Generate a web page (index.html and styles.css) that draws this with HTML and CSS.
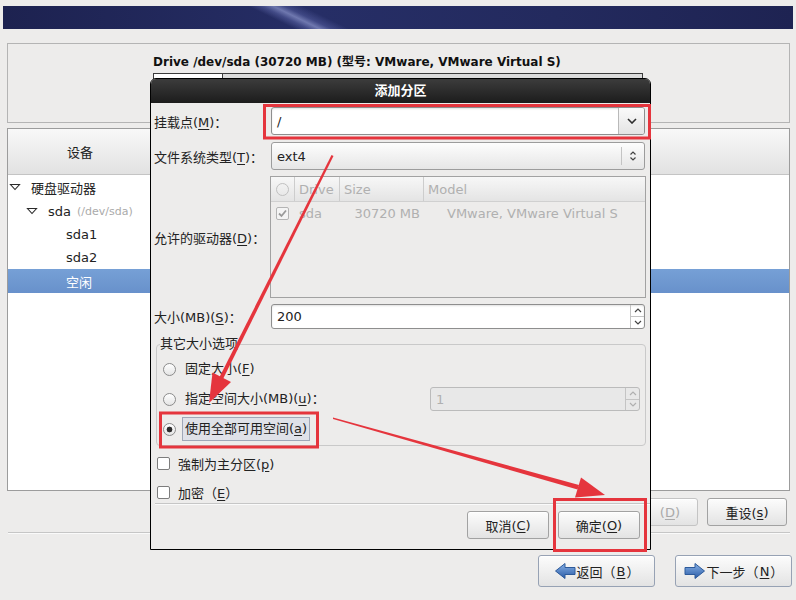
FILE: index.html
```html
<!DOCTYPE html>
<html lang="zh-CN">
<head>
    <meta charset="UTF-8">
    <meta name="viewport" content="width=device-width, initial-scale=1.0">
    <title>添加分区</title>
    <link rel="stylesheet" href="styles.css">
</head>
<body>
    <!-- Installer banner -->
    <div class="banner"></div>

    <!-- Drive summary -->
    <div class="drive-box">
        <div class="drive-title">Drive /dev/sda (30720 MB) (型号: VMware, VMware Virtual S)</div>
        <div class="drive-bar"><div class="seg-used"></div></div>
    </div>

    <!-- Device tree -->
    <div class="tree-panel">
        <div class="tree-head"><div class="col-device">设备</div></div>
        <div class="tree-row lvl0">
            <svg class="expander" width="12" height="8" viewBox="0 0 12 8"><path d="M1.5 1.5h9l-4.5 5z" fill="none" stroke="#2a2a2a" stroke-width="1.1"/></svg>
            <span>硬盘驱动器</span>
        </div>
        <div class="tree-row lvl1">
            <svg class="expander" width="12" height="8" viewBox="0 0 12 8"><path d="M1.5 1.5h9l-4.5 5z" fill="none" stroke="#2a2a2a" stroke-width="1.1"/></svg>
            <span>sda</span><span class="dev-path">(/dev/sda)</span>
        </div>
        <div class="tree-row lvl2">sda1</div>
        <div class="tree-row lvl2">sda2</div>
        <div class="tree-row lvl2 selected">空闲</div>
    </div>

    <div class="actions">
        <button class="button disabled delete-button"><span class="delete-word">删除</span>(<u>D</u>)</button>
        <button class="button">重设(<u>s</u>)</button>
    </div>
    <div class="separator"></div>
    <div class="nav">
        <button class="button nav-button">
            <svg width="22" height="18" viewBox="0 0 22 18"><defs><linearGradient id="back-fill" x1="0" y1="0" x2="0" y2="1"><stop offset="0" stop-color="#86b0e6"/><stop offset="1" stop-color="#2a5ba6"/></linearGradient></defs><path d="M21 5.5H11V1.5L1.5 9l9.5 7.5v-4h10z" fill="url(#back-fill)" stroke="#2d5a9a" stroke-width="1"/></svg>
            返回（<u>B</u>）
        </button>
        <button class="button nav-button">
            <svg width="22" height="18" viewBox="0 0 22 18"><defs><linearGradient id="next-fill" x1="0" y1="0" x2="0" y2="1"><stop offset="0" stop-color="#86b0e6"/><stop offset="1" stop-color="#2a5ba6"/></linearGradient></defs><path d="M1 5.5h10V1.5L20.5 9 11 16.5v-4H1z" fill="url(#next-fill)" stroke="#2d5a9a" stroke-width="1"/></svg>
            下一步（<u>N</u>）
        </button>
    </div>

    <!-- Add partition dialog -->
    <div class="dialog">
        <div class="dialog-title">添加分区</div>
        <div class="dialog-body">
            <div class="form-row row-mount">
                <label class="field-label">挂载点(<u>M</u>)：</label>
                <div class="combo-entry">
                    <span class="entry-text">/</span>
                    <span class="combo-button">
                        <svg width="10" height="6" viewBox="0 0 10 6"><path d="M1 1l4 4 4-4" fill="none" stroke="#2e2e2e" stroke-width="1.6"/></svg>
                    </span>
                </div>
            </div>

            <div class="form-row row-fs">
                <label class="field-label">文件系统类型(<u>T</u>)：</label>
                <div class="combo">
                    <span class="combo-text">ext4</span>
                    <span class="combo-sep"></span>
                    <svg class="updown" width="8" height="12" viewBox="0 0 8 12"><path d="M1.5 4.5L4 2l2.5 2.5M1.5 7.5L4 10l2.5-2.5" fill="none" stroke="#444" stroke-width="1.2"/></svg>
                </div>
            </div>

            <div class="form-row row-drives">
                <label class="field-label">允许的驱动器(<u>D</u>)：</label>
                <div class="drive-table">
                    <div class="table-head">
                        <div class="th th-check"><span class="radio-mark"></span></div>
                        <div class="th">Drive</div>
                        <div class="th">Size</div>
                        <div class="th">Model</div>
                    </div>
                    <div class="table-row">
                        <div class="td td-check">
                            <svg width="13" height="13" viewBox="0 0 13 13"><rect x="0.5" y="0.5" width="12" height="12" rx="1.5" fill="#f4f4f4" stroke="#b4b4b4"/><path d="M3 6.5l2.5 2.5L10 3.5" fill="none" stroke="#9a9a9a" stroke-width="1.8"/></svg>
                        </div>
                        <div class="td td-drive">sda</div>
                        <div class="td td-size">30720 MB</div>
                        <div class="td td-model">VMware, VMware Virtual S</div>
                    </div>
                </div>
            </div>

            <div class="form-row row-size">
                <label class="field-label">大小(MB)(<u>S</u>)：</label>
                <div class="spin">
                    <span class="entry-text">200</span>
                    <span class="spin-buttons">
                        <span class="spin-half"><svg width="8" height="5" viewBox="0 0 8 5"><path d="M1 4l3-3 3 3" fill="none" stroke="#444" stroke-width="1.2"/></svg></span>
                        <span class="spin-half"><svg width="8" height="5" viewBox="0 0 8 5"><path d="M1 1l3 3 3-3" fill="none" stroke="#444" stroke-width="1.2"/></svg></span>
                    </span>
                </div>
            </div>

            <fieldset class="size-options">
                <legend>其它大小选项</legend>
                <div class="option-row">
                    <span class="radio"></span>
                    <span class="option-text">固定大小(<u>F</u>)</span>
                </div>
                <div class="option-row">
                    <span class="radio"></span>
                    <span class="option-text">指定空间大小(MB)(<u>u</u>)：</span>
                    <div class="spin spin-disabled">
                        <span class="entry-text">1</span>
                        <span class="spin-buttons">
                            <span class="spin-half"><svg width="8" height="5" viewBox="0 0 8 5"><path d="M1 4l3-3 3 3" fill="none" stroke="#b0b0b0" stroke-width="1.2"/></svg></span>
                            <span class="spin-half"><svg width="8" height="5" viewBox="0 0 8 5"><path d="M1 1l3 3 3-3" fill="none" stroke="#b0b0b0" stroke-width="1.2"/></svg></span>
                        </span>
                    </div>
                </div>
                <div class="option-row">
                    <span class="radio checked"></span>
                    <span class="option-text focused">使用全部可用空间(<u>a</u>)</span>
                </div>
            </fieldset>

            <div class="check-row first">
                <span class="checkbox"></span>
                <span>強制为主分区(<u>p</u>)</span>
            </div>
            <div class="check-row">
                <span class="checkbox"></span>
                <span>加密（<u>E</u>）</span>
            </div>

            <div class="dialog-separator"></div>

            <div class="dialog-buttons">
                <button class="button">取消(<u>C</u>)</button>
                <button class="button">确定(<u>O</u>)</button>
            </div>
        </div>
    </div>

    <!-- Tutorial annotations -->
    <svg class="annotations" width="796" height="600" viewBox="0 0 796 600">
        <g fill="none" stroke="#e5353d" stroke-width="3">
            <rect x="264.5" y="105.5" width="385" height="32.5"/>
            <rect x="160.5" y="413" width="157" height="34"/>
            <rect x="554.5" y="499.5" width="91" height="51"/>
        </g>
        <g fill="#e5353d">
            <polygon points="331.5,155 333.5,156 223,379 219.5,377"/>
            <polygon points="209,403 212.5,372.5 231,382"/>
            <polygon points="333,417.5 333,419 577.5,489.5 579,485"/>
            <polygon points="605,495 575,497.5 581,477.5"/>
        </g>
    </svg>
</body>
</html>
```

FILE: styles.css
```css
body {
    margin: 0;
    width: 796px;
    height: 600px;
    overflow: hidden;
    position: relative;
    background-color: #edeceb;
    font-family: "DejaVu Sans", "Noto Sans CJK SC", sans-serif;
    font-size: 13px;
    color: #222;
}
u {
    text-underline-offset: 2px;
}
.banner {
    margin: 6px 3px 0;
    height: 23px;
    background:
        linear-gradient(26deg, transparent 128px, rgba(120, 130, 200, 0.35) 134px, rgba(160, 170, 225, 0.6) 139px, rgba(110, 120, 190, 0.35) 144px, transparent 152px),
        linear-gradient(to right, #1d2250, #262e66 40%, #232a5e 70%, #1e2352);
}

/* Drive summary box */
.drive-box {
    margin: 14px 6px 0 7px;
    height: 78px;
    border: 1px solid #b4b4b4;
    padding-left: 145px;
    overflow: hidden;
}
.drive-title {
    margin-top: 10px;
    line-height: 17px;
    font-size: 12px;
    font-weight: bold;
    color: #111;
}
.drive-bar {
    margin-top: 2px;
    width: 488px;
    height: 40px;
    border: 1px solid #3c3c3c;
    background: #dcdcdc;
    display: flex;
}
.seg-used {
    width: 68px;
    background: #fff;
    border-right: 1px solid #3c3c3c;
}

/* Device tree */
.tree-panel {
    margin: 5px 6px 0 7px;
    height: 361px;
    border: 1px solid #9c9c9c;
    background: #fff;
}
.tree-head {
    height: 45px;
    border-bottom: 1px solid #c4c4c4;
    background: linear-gradient(#f8f8f8, #e2e2e2);
    display: flex;
    align-items: center;
}
.col-device {
    width: 144px;
    text-align: center;
}
.tree-row {
    height: 23px;
    display: flex;
    align-items: center;
}
.tree-row.lvl0 { padding-left: 1px; height: 24px; }
.tree-row.lvl1 { padding-left: 18px; height: 24px; }
.tree-row.lvl2 { padding-left: 58px; }
.expander {
    margin-right: 10px;
    flex: none;
}
.dev-path {
    font-size: 11px;
    color: #aaa;
    margin-left: 6px;
}
.tree-row.selected {
    height: 24px;
    background: linear-gradient(#76a0d6, #6891cb);
    color: #fff;
}

/* Buttons */
.button {
    font: inherit;
    color: #222;
    border: 1px solid #a2a2a2;
    border-radius: 3px;
    background: linear-gradient(#fcfcfc, #e3e3e3);
    box-shadow: inset 0 1px 0 #fff;
    padding: 0;
    display: flex;
    align-items: center;
    justify-content: center;
    box-sizing: border-box;
}
.button.disabled {
    color: #a9a9a9;
    border-color: #c4c4c4;
}
.delete-button {
    justify-content: flex-end;
    padding-right: 17px;
}
.delete-word {
    margin-right: 12px;
}
.actions {
    margin-top: 7px;
    padding-right: 9px;
    display: flex;
    justify-content: flex-end;
    gap: 9px;
}
.actions .button {
    width: 80px;
    height: 28px;
}
.separator {
    margin: 6px 6px 0 8px;
    border-top: 1px solid #c6c6c6;
    border-bottom: 1px solid #fafafa;
}
.nav {
    margin-top: 21px;
    padding-right: 4px;
    display: flex;
    justify-content: flex-end;
    gap: 20px;
}
.nav-button {
    width: 117px;
    height: 32px;
    border-color: #97a2b4;
    gap: 1px;
}

/* Dialog */
.dialog {
    position: absolute;
    left: 150px;
    top: 78px;
    width: 499px;
    height: 470px;
    border: 1px solid #000;
    border-radius: 6px 6px 0 0;
    background: #edeceb;
    overflow: hidden;
}
.dialog-title {
    height: 24px;
    line-height: 24px;
    text-align: center;
    font-weight: bold;
    color: #fff;
    background: linear-gradient(#3c3c3c, #1c1c1c);
}
.dialog-body {
    padding: 0 5px 0 3px;
}
.form-row {
    display: grid;
    grid-template-columns: 117px 1fr;
    align-items: center;
}
.row-mount { margin-top: 4px; }
.row-fs { margin-top: 7px; }
.row-drives { margin-top: 6px; }
.row-size { margin-top: 6px; }

.combo-entry, .spin {
    height: 28px;
    box-sizing: border-box;
    border: 1px solid #8e8e8e;
    border-radius: 3px;
    background: #fff;
    box-shadow: inset 0 1px 2px rgba(0, 0, 0, 0.12);
    display: flex;
    align-items: stretch;
}
.entry-text {
    flex: 1;
    padding-left: 5px;
    display: flex;
    align-items: center;
}
.combo-button {
    width: 25px;
    border-left: 1px solid #b9b9b9;
    background: linear-gradient(#fafafa, #e4e4e4);
    border-radius: 0 2px 2px 0;
    display: flex;
    align-items: center;
    justify-content: center;
}
.combo {
    height: 28px;
    box-sizing: border-box;
    border: 1px solid #9c9c9c;
    border-radius: 3px;
    background: linear-gradient(#fdfdfd, #e6e6e6);
    display: flex;
    align-items: center;
}
.combo-text {
    flex: 1;
    padding-left: 5px;
}
.combo-sep {
    width: 1px;
    height: 18px;
    background: #c4c4c4;
    margin-right: 7px;
}
.updown {
    margin-right: 7px;
}

/* Drives table */
.drive-table {
    height: 122px;
    box-sizing: border-box;
    border: 1px solid #a2a2a2;
    margin-right: -1px;
    margin-left: -1px;
    background: #edeceb;
    color: #b0b0b0;
}
.table-head, .table-row {
    display: grid;
    grid-template-columns: 23px 45px 84px 1fr;
}
.table-head {
    height: 24px;
    border-bottom: 1px solid #d0d0d0;
    background: linear-gradient(#f7f7f7, #e4e4e4);
}
.th {
    display: flex;
    align-items: center;
    padding-left: 4px;
    border-left: 1px solid #cdcdcd;
}
.th.th-check {
    border-left: 0;
    justify-content: center;
    padding-left: 0;
}
.radio-mark {
    width: 11px;
    height: 11px;
    border: 1px solid #c0c0c0;
    border-radius: 50%;
}
.table-row {
    height: 22px;
    align-items: center;
}
.td-check {
    display: flex;
    justify-content: center;
}
.td-drive { padding-left: 5px; }
.td-size { text-align: right; padding-right: 3px; }
.td-model { padding-left: 24px; white-space: nowrap; }

/* Size spin */
.spin {
    height: 25px;
}
.spin-buttons {
    width: 13px;
    border-left: 1px solid #c4c4c4;
    display: flex;
    flex-direction: column;
}
.spin-half {
    flex: 1;
    display: flex;
    align-items: center;
    justify-content: center;
}
.spin-half + .spin-half {
    border-top: 1px solid #c4c4c4;
}

/* Other size options frame */
.size-options {
    margin: 7px -1px 0 2px;
    padding: 2px 5px 1px 6px;
    border: 1px solid #c9c9c9;
    border-radius: 4px;
}
.size-options legend {
    margin-left: -3px;
    padding: 0;
    line-height: 16px;
}
.option-row {
    height: 30px;
    display: flex;
    align-items: center;
}
.radio {
    width: 13px;
    height: 13px;
    box-sizing: border-box;
    border: 1px solid #8b8b8b;
    border-radius: 50%;
    background: linear-gradient(#fff, #e4e4e4);
    flex: none;
    margin-right: 6px;
}
.radio.checked {
    background: radial-gradient(circle, #2c2c2c 0 2.6px, transparent 3.2px), linear-gradient(#fff, #e4e4e4);
}
.option-text {
    padding: 0 2px;
    line-height: 22px;
    border: 1px solid transparent;
}
.option-text.focused {
    background: #dfe1e8;
    border-color: #9fa7b8;
}
.spin-disabled {
    margin-left: auto;
    width: 210px;
    height: 24px;
    border-color: #bbb;
    background: #e8e8e8;
    box-shadow: none;
    color: #b0b0b0;
}

/* Checkboxes */
.check-row {
    height: 22px;
    margin-top: 7px;
    padding-left: 3px;
    display: flex;
    align-items: center;
    gap: 8px;
}
.check-row.first {
    margin-top: 6px;
}
.checkbox {
    width: 13px;
    height: 13px;
    box-sizing: border-box;
    border: 1px solid #7d7d7d;
    border-radius: 2px;
    background: #fff;
}
.dialog-separator {
    margin-left: 1px;
    margin-right: -5px;
    border-top: 1px solid #c6c6c6;
    border-bottom: 1px solid #fafafa;
}
.dialog-buttons {
    margin-top: 6px;
    padding-right: 5px;
    display: flex;
    justify-content: flex-end;
    gap: 9px;
}
.dialog-buttons .button {
    width: 82px;
    height: 28px;
}

/* Annotations drawn over the screenshot */
.annotations {
    position: absolute;
    left: 0;
    top: 0;
    pointer-events: none;
}
```
